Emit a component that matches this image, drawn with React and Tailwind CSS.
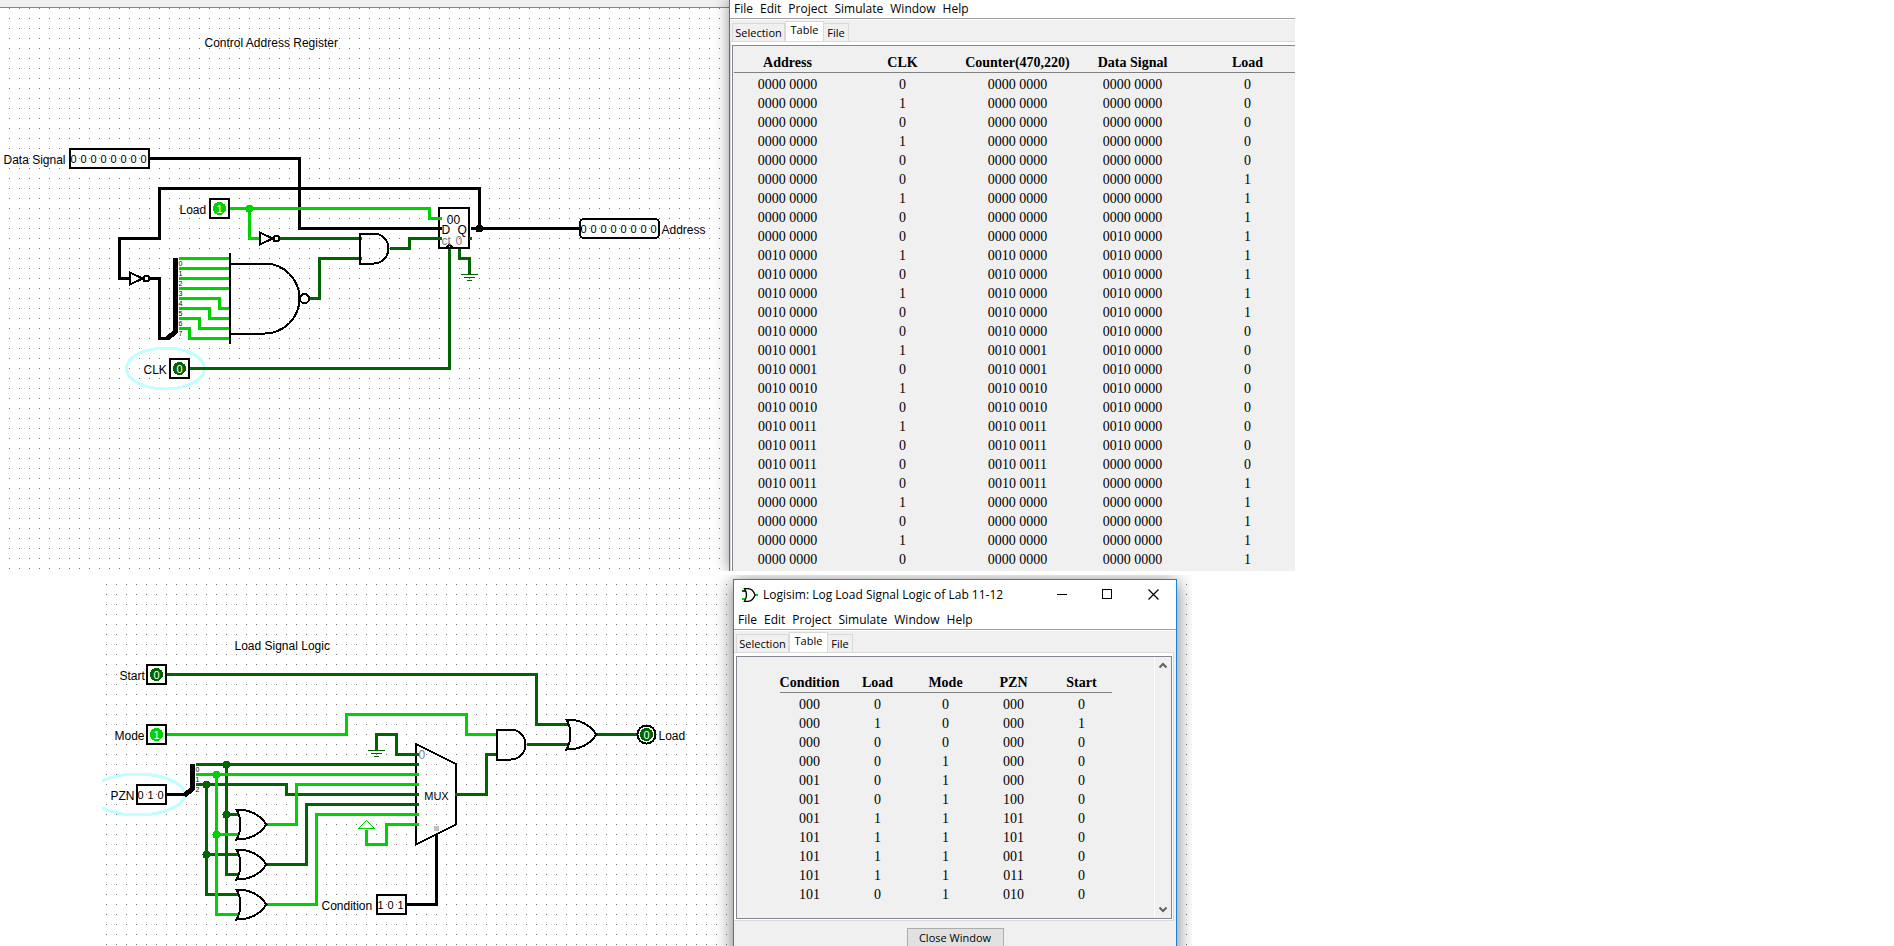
import React from "react";

const ON = "#00d200";
const OFF = "#006400";
const BUS = "#000000";

/* ---------- circuit primitives ---------- */

function Dots({ id, x, y }) {
  return (
    <pattern id={id} x={x} y={y} width="10" height="10" patternUnits="userSpaceOnUse">
      <rect width="1" height="1" fill="#777777" />
    </pattern>
  );
}

function Wire({ d, color }) {
  return <path d={d} fill="none" stroke={color} strokeWidth="3" />;
}

function Node({ x, y, color, r = 4 }) {
  return <circle cx={x} cy={y} r={r} fill={color} />;
}

function Label({ x, y, children, anchor = "start", fill = "black" }) {
  return (
    <text x={x} y={y} textAnchor={anchor} fill={fill} className="text-[12px]">
      {children}
    </text>
  );
}

function Bits({ x, y, value, rounded }) {
  return (
    <g>
      <rect
        x={x + 0.5}
        y={y - 9.5}
        width={value.length * 10 - 1}
        height="19"
        rx={rounded ? 4 : 0}
        fill="none"
        stroke="black"
        strokeWidth="2"
      />
      {value.split("").map((b, i) => (
        <text key={i} x={x + 4 + i * 10} y={y + 4} textAnchor="middle" className="text-[11px]">
          {b}
        </text>
      ))}
    </g>
  );
}

function Pin({ x, y, value, output }) {
  return (
    <g>
      {output ? (
        <circle cx={x} cy={y} r="9" fill="white" stroke="black" strokeWidth="2" />
      ) : (
        <rect x={x - 9.5} y={y - 9.5} width="19" height="19" fill="white" stroke="black" strokeWidth="2" />
      )}
      <circle cx={x} cy={y} r="6.5" fill={value === "1" ? ON : OFF} />
      <text x={x} y={y + 4} textAnchor="middle" fill="white" className="text-[11px]">
        {value}
      </text>
    </g>
  );
}

function Shape({ d }) {
  return <path d={d} fill="none" stroke="black" strokeWidth="2" />;
}

function OrGate({ x, y }) {
  return (
    <g transform={`translate(${x} ${y})`}>
      <Shape d="M0 -15 Q20 -15 30 0 Q20 15 0 15 Q8 0 0 -15 Z" />
    </g>
  );
}

function AndGate({ x, y }) {
  return (
    <g transform={`translate(${x} ${y})`}>
      <Shape d="M0.5 -15 H14 A15 15 0 0 1 14 15 H0.5 Z" />
    </g>
  );
}

function NotGate({ x, y }) {
  return (
    <g transform={`translate(${x} ${y})`}>
      <Shape d="M0.5 -6 L13 0 L0.5 6 Z" />
      <circle cx="17" cy="0" r="3" fill="none" stroke="black" strokeWidth="2" />
    </g>
  );
}

function Ground({ x, y }) {
  return (
    <path
      d={`M${x - 8.5} ${y} h17 M${x - 5.5} ${y + 3} h11 M${x - 2.5} ${y + 6} h5`}
      stroke={OFF}
      strokeWidth="1"
      fill="none"
    />
  );
}

function PinNumbers({ x, y, count }) {
  return Array.from({ length: count }, (_, i) => (
    <text key={i} x={x} y={y + i * 10} className="text-[7px]">
      {i}
    </text>
  ));
}

/* ---------- circuits ---------- */

function AddressRegisterCircuit() {
  return (
    <svg
      width="729"
      height="563"
      viewBox="0 8 729 563"
      shapeRendering="crispEdges"
      className="block"
      role="img"
      aria-label="Control Address Register circuit"
    >
      <defs>
        <Dots id="gridA" x="9" y="8" />
      </defs>
      <rect x="9" y="8" width="720" height="563" fill="url(#gridA)" />
      <g transform="translate(0.5 0.5)">
        <Label x="204" y="46">Control Address Register</Label>

        <ellipse cx="165" cy="368" rx="39" ry="20.5" fill="none" stroke="#c0ffff" strokeWidth="3" />

        <Wire color={BUS} d="M149 158 H299 V228 H439" />
        <Wire color={BUS} d="M470 228 H581 M479 228 V188 H159 V238 H119 V278 H129" />
        <Wire color={BUS} d="M149 278 H159 V338 H169" />
        <Wire color={ON} d="M229 208 H429 V218 H440 M249 208 V238 H260" />
        <Wire color={OFF} d="M279 238 H361 M309 298 H319 V258 H361 M389 248 H409 V238 H440" />
        <Wire color={OFF} d="M189 368 H449 V248 M459 248 V258 H469 V274" />
        <Wire
          color={ON}
          d="M178 258 H230 M178 268 H230 M178 278 H230 M178 288 H230 M178 298 H219 V308 H230 M178 308 H209 V318 H230 M178 318 H199 V328 H230 M178 328 H189 V338 H230"
        />
        <Ground x={469} y={274} />

        <path d="M167 338 L175 331 V257" fill="none" stroke="black" strokeWidth="5" />
        <PinNumbers x={178} y={265} count={8} />

        <NotGate x={129} y={278} />
        <NotGate x={259} y={238} />
        <Shape d="M229.5 252 V343" />
        <Shape d="M230 263 H264 A35 35 0 0 1 264 333 H230" />
        <circle cx="304" cy="298" r="4.5" fill="none" stroke="black" strokeWidth="2" />
        <AndGate x={359} y={248} />

        <rect x="438.5" y="207.5" width="30" height="40" fill="none" stroke="black" strokeWidth="2" />
        <Wire color={ON} d="M436 218 H441" />
        <Wire color={BUS} d="M436 228 H441" />
        <Wire color={OFF} d="M436 238 H441 M468 238 H471" />
        <Shape d="M446 247 L449 244 L452 247" />
        <Label x="453" y="223" anchor="middle">00</Label>
        <Label x="441" y="233">D</Label>
        <Label x="457" y="233">Q</Label>
        <Label x="441" y="244" fill="#808080">ct</Label>
        <Label x="455" y="244" fill="#808080">0</Label>

        <Node x={249} y={208} color={ON} />
        <Node x={479} y={228} color={BUS} />

        <Label x="3" y="163">Data Signal</Label>
        <Bits x={69} y={158} value="00000000" />
        <Label x="179" y="213">Load</Label>
        <Pin x={219} y={208} value="1" />
        <Label x="143" y="373">CLK</Label>
        <Pin x={179} y={368} value="0" />
        <Bits x={579} y={228} value="00000000" rounded />
        <Label x="661" y="233">Address</Label>
      </g>
    </svg>
  );
}

function LoadSignalCircuit() {
  return (
    <svg
      width="631"
      height="371"
      viewBox="102 575 631 371"
      shapeRendering="crispEdges"
      className="block shrink-0"
      role="img"
      aria-label="Load Signal Logic circuit"
    >
      <defs>
        <Dots id="gridB" x="106" y="584" />
      </defs>
      <rect x="102" y="575" width="631" height="371" fill="url(#gridB)" />
      <g transform="translate(0.5 0.5)">
        <Label x="234" y="649">Load Signal Logic</Label>

        <ellipse cx="137" cy="794" rx="47" ry="20.5" fill="none" stroke="#c0ffff" strokeWidth="3" />

        <Wire color={BUS} d="M166 794 H187 M406 904 H436 V834" />
        <Wire color={OFF} d="M166 674 H536 V724 H568 M526 744 H568 M596 734 H637" />
        <Wire color={ON} d="M166 734 H346 V714 H466 V734 H497" />
        <Wire color={OFF} d="M376 750 V734 H396 V754 H418" />
        <Wire color={OFF} d="M195 764 H418 M226 764 V874 H238 M226 814 H238" />
        <Wire color={OFF} d="M195 784 H286 V794 H418 M206 784 V894 H238 M206 854 H238" />
        <Wire color={ON} d="M195 774 H418 M216 774 V914 H238 M216 834 H238" />
        <Wire color={ON} d="M266 824 H296 V784 H418" />
        <Wire color={OFF} d="M266 864 H306 V804 H418" />
        <Wire color={ON} d="M266 904 H316 V814 H418" />
        <Wire color={ON} d="M366 829 V844 H386 V824 H418" />
        <Wire color={OFF} d="M455 794 H486 V754 H497" />
        <Ground x={376} y={750} />
        <path d="M358 828 L366 820 L374 828 Z" fill="white" stroke={ON} strokeWidth="1" />

        <path d="M184 795 L192 788 V763" fill="none" stroke="black" strokeWidth="5" />
        <PinNumbers x={195} y={771} count={3} />

        <OrGate x={236} y={824} />
        <OrGate x={236} y={864} />
        <OrGate x={236} y={904} />
        <OrGate x={566} y={734} />
        <AndGate x={496} y={744} />
        <Shape d="M415.5 743.5 L455.5 763.5 V824 L415.5 844 Z" />
        <Wire color={OFF} d="M414 754 H418 M414 764 H418 M414 794 H418 M414 804 H418 M454 794 H458" />
        <Wire color={ON} d="M414 774 H418 M414 784 H418 M414 814 H418 M414 824 H418" />
        <rect x="433.5" y="825.5" width="5" height="5" fill="#c0c0c0" />
        <Label x="418" y="758" fill="#808080">0</Label>
        <text x="436" y="799" textAnchor="middle" className="text-[11px]">MUX</text>

        <Node x={226} y={764} color={OFF} />
        <Node x={216} y={774} color={ON} />
        <Node x={206} y={784} color={OFF} />
        <Node x={226} y={814} color={OFF} />
        <Node x={216} y={834} color={ON} />
        <Node x={206} y={854} color={OFF} />

        <Label x="119" y="679">Start</Label>
        <Pin x={156} y={674} value="0" />
        <Label x="114" y="739">Mode</Label>
        <Pin x={156} y={734} value="1" />
        <Label x="110" y="799">PZN</Label>
        <Bits x={136} y={794} value="010" />
        <Label x="321" y="909">Condition</Label>
        <Bits x={376} y={904} value="101" />
        <Pin x={646} y={734} value="0" output />
        <Label x="658" y="739">Load</Label>
      </g>
    </svg>
  );
}

/* ---------- log windows ---------- */

const MENUS = ["File", "Edit", "Project", "Simulate", "Window", "Help"];

function MenuBar() {
  return (
    <nav className="flex h-[19px] items-center gap-[7px] border-b border-[#a0a0a0] bg-white pl-1 text-[12px] leading-4">
      {MENUS.map((m) => (
        <button key={m} type="button">
          {m}
        </button>
      ))}
    </nav>
  );
}

function Tabs() {
  return (
    <div role="tablist" className="flex items-end border-t border-white pl-[2px] pt-px text-[11px] leading-4">
      <button type="button" role="tab" aria-selected="false" className="h-[18px] w-[53px] border border-b-0 border-[#d9d9d9]">
        Selection
      </button>
      <button type="button" role="tab" aria-selected="true" className="flex h-5 w-[39px] justify-center border border-b-0 border-[#d9d9d9] bg-white">
        Table
      </button>
      <button type="button" role="tab" aria-selected="false" className="h-[18px] w-[25px] border border-b-0 border-l-0 border-[#d9d9d9]">
        File
      </button>
    </div>
  );
}

function LogTable({ columns, rows, widths, className }) {
  return (
    <table className={`table-fixed border-collapse text-center font-["Liberation_Serif",serif] text-[14px] leading-[19px] ${className}`}>
      <colgroup>
        {columns.map((c, i) => (
          <col key={c} className={widths[i]} />
        ))}
      </colgroup>
      <thead>
        <tr className="border-b border-[#808080]">
          {columns.map((c) => (
            <th key={c} scope="col" className="whitespace-nowrap p-0 pr-2 pt-[7px] font-bold last:pr-0">
              {c}
            </th>
          ))}
        </tr>
      </thead>
      <tbody>
        <tr aria-hidden="true" className="h-[2px]" />
        {rows.map((r, i) => (
          <tr key={i}>
            {r.map((v, j) => (
              <td key={j} className="whitespace-nowrap p-0 pr-2 last:pr-0">
                {v}
              </td>
            ))}
          </tr>
        ))}
      </tbody>
    </table>
  );
}

const Z = "0000 0000";
const A = "0010 0000";
const REGISTER_ROWS = [
  [Z, 0, Z, Z, 0],
  [Z, 1, Z, Z, 0],
  [Z, 0, Z, Z, 0],
  [Z, 1, Z, Z, 0],
  [Z, 0, Z, Z, 0],
  [Z, 0, Z, Z, 1],
  [Z, 1, Z, Z, 1],
  [Z, 0, Z, Z, 1],
  [Z, 0, Z, A, 1],
  [A, 1, A, A, 1],
  [A, 0, A, A, 1],
  [A, 1, A, A, 1],
  [A, 0, A, A, 1],
  [A, 0, A, A, 0],
  ["0010 0001", 1, "0010 0001", A, 0],
  ["0010 0001", 0, "0010 0001", A, 0],
  ["0010 0010", 1, "0010 0010", A, 0],
  ["0010 0010", 0, "0010 0010", A, 0],
  ["0010 0011", 1, "0010 0011", A, 0],
  ["0010 0011", 0, "0010 0011", A, 0],
  ["0010 0011", 0, "0010 0011", Z, 0],
  ["0010 0011", 0, "0010 0011", Z, 1],
  [Z, 1, Z, Z, 1],
  [Z, 0, Z, Z, 1],
  [Z, 1, Z, Z, 1],
  [Z, 0, Z, Z, 1],
];

const LOAD_ROWS = [
  ["000", 0, 0, "000", 0],
  ["000", 1, 0, "000", 1],
  ["000", 0, 0, "000", 0],
  ["000", 0, 1, "000", 0],
  ["001", 0, 1, "000", 0],
  ["001", 0, 1, "100", 0],
  ["001", 1, 1, "101", 0],
  ["101", 1, 1, "101", 0],
  ["101", 1, 1, "001", 0],
  ["101", 1, 1, "011", 0],
  ["101", 0, 1, "010", 0],
];

function RegisterLogWindow() {
  return (
    <div className="relative max-w-[566px] flex-1">
      <div className="h-full border-l border-[#1883d7] bg-[#f0f0f0] shadow-[0_0_14px_rgba(0,0,0,0.45)] [clip-path:inset(0_0_0_-20px)]">
        <MenuBar />
        <Tabs />
        <div className="overflow-hidden border-l border-t border-[#d9d9d9] bg-white pl-px pt-[3px]">
          <div className="overflow-hidden border-l border-t border-[#828790] bg-[#f0f0f0] pb-1 pl-px">
            <LogTable
              columns={["Address", "CLK", "Counter(470,220)", "Data Signal", "Load"]}
              rows={REGISTER_ROWS}
              widths={["w-[115px]", "w-[115px]", "w-[115px]", "w-[115px]", "w-[107px]"]}
              className="w-[567px]"
            />
          </div>
        </div>
      </div>
    </div>
  );
}

function TitleBar() {
  return (
    <div className="flex h-[31px] items-center bg-white pb-[2px] pl-2">
      <svg width="16" height="14" viewBox="0 0 16 14" className="mr-[5px] shrink-0" aria-hidden="true">
        <path d="M0 3 H5" stroke={OFF} strokeWidth="2" />
        <path d="M0 11 H5" stroke={ON} strokeWidth="2" />
        <path d="M13 7 H16" stroke={ON} strokeWidth="2" />
        <path d="M2.5 0.7 H6 Q11 1 13 7 Q11 13 6 13.3 H2.5 Q6.5 7 2.5 0.7 Z" fill="white" stroke="black" strokeWidth="1.3" />
      </svg>
      <h1 className="flex-1 whitespace-nowrap text-[12px] leading-4">Logisim: Log Load Signal Logic of Lab 11-12</h1>
      <button type="button" aria-label="Minimize" className="flex w-[45px] justify-center">
        <svg width="11" height="11" viewBox="0 0 11 11">
          <path d="M0 5.5 H10" stroke="black" />
        </svg>
      </button>
      <button type="button" aria-label="Maximize" className="flex w-[45px] justify-center">
        <svg width="11" height="11" viewBox="0 0 11 11">
          <rect x="0.5" y="0.5" width="9" height="9" fill="none" stroke="black" />
        </svg>
      </button>
      <button type="button" aria-label="Close" className="flex w-[46px] justify-center">
        <svg width="11" height="11" viewBox="0 0 11 11">
          <path d="M0.5 0.5 L10.5 10.5 M10.5 0.5 L0.5 10.5" stroke="black" strokeWidth="1.2" />
        </svg>
      </button>
    </div>
  );
}

function ScrollArrow({ label, d }) {
  return (
    <button type="button" aria-label={label} className="flex h-[17px] w-full items-center justify-center">
      <svg width="8" height="7" viewBox="0 0 8 7">
        <path d={d} fill="none" stroke="#606060" strokeWidth="2" />
      </svg>
    </button>
  );
}

function LoadLogWindow() {
  return (
    <div className="relative z-10 mt-1 max-w-[444px] flex-1 border border-[#1883d7] bg-[#f0f0f0] shadow-[0_3px_18px_rgba(0,0,0,0.55)]">
      <TitleBar />
      <MenuBar />
      <Tabs />
      <div className="mr-[2px] border border-l-0 border-[#d9d9d9] bg-white pb-px pl-[2px] pr-px pt-[3px]">
        <div className="flex border border-[#828790] bg-[#f0f0f0]">
          <div className="flex flex-1 justify-center pb-[14px] pt-[9px]">
            <LogTable
              columns={["Condition", "Load", "Mode", "PZN", "Start"]}
              rows={LOAD_ROWS}
              widths={["w-[68px]", "w-[68px]", "w-[68px]", "w-[68px]", "w-[60px]"]}
              className="w-[332px]"
            />
          </div>
          <div className="flex w-[17px] flex-col justify-between border-l border-white">
            <ScrollArrow label="Scroll up" d="M0.5 5.5 L4 2 L7.5 5.5" />
            <ScrollArrow label="Scroll down" d="M0.5 1.5 L4 5 L7.5 1.5" />
          </div>
        </div>
      </div>
      <div className="flex justify-center pb-2 pt-[7px]">
        <button type="button" className="flex h-[23px] w-[97px] justify-center border border-[#adadad] bg-[#e1e1e1] text-[11px] leading-[18px]">
          Close Window
        </button>
      </div>
    </div>
  );
}

export default function App() {
  return (
    <main className='flex h-screen flex-col gap-1 overflow-hidden bg-white font-["Open_Sans","Noto_Sans",sans-serif] text-black'>
      <section className="flex h-[571px] shrink-0 overflow-hidden">
        <div className='shrink-0 font-["Liberation_Sans",Arial,sans-serif]'>
          <div className="h-2 border-b border-[#828790] bg-[#f0f0f0]" />
          <AddressRegisterCircuit />
        </div>
        <RegisterLogWindow />
      </section>
      <section className="flex min-h-0 flex-1 items-start overflow-hidden pl-[102px]">
        <div className='shrink-0 font-["Liberation_Sans",Arial,sans-serif]'>
          <LoadSignalCircuit />
        </div>
        <LoadLogWindow />
        <svg width="15" height="371" viewBox="1177 575 15 371" className="block shrink-0" shapeRendering="crispEdges" aria-hidden="true">
          <defs>
            <Dots id="gridC" x="1186" y="584" />
          </defs>
          <rect x="1177" y="575" width="15" height="371" fill="url(#gridC)" />
        </svg>
        <div className="relative z-20 flex-1 self-stretch bg-white" />
      </section>
    </main>
  );
}
